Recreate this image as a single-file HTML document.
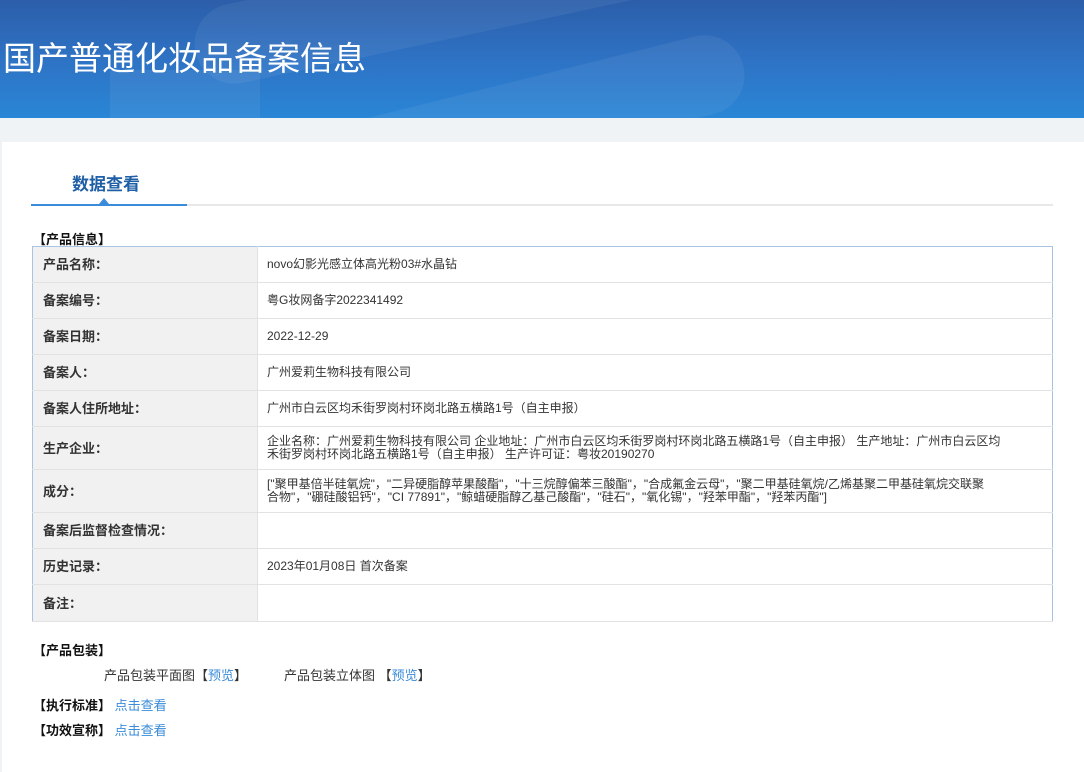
<!DOCTYPE html>
<html><head><meta charset="utf-8"><style>
*{margin:0;padding:0;box-sizing:border-box}
body{width:1084px;height:772px;overflow:hidden;background:#eff3f6;font-family:"Liberation Sans","Noto Sans CJK SC",sans-serif;color:#333;position:relative}
.hd{position:absolute;left:0;top:0;width:1084px;height:118px;background:linear-gradient(180deg,#2c5ea9 0%,#2e72c4 50%,#2a86d6 100%);overflow:hidden}
.hd h1{position:absolute;left:3px;top:32px;font-size:33px;font-weight:normal;color:#fff;letter-spacing:0}
.blob{position:absolute;border-radius:40px;background:rgba(255,255,255,.06)}
.panel{position:absolute;left:2px;top:142px;width:1082px;height:630px;background:#fff}
.tab{position:absolute;left:72px;top:170px;font-size:17px;font-weight:bold;color:#1f5fa6}
.line{position:absolute;left:31px;top:204px;width:1022px;height:2px;background:#e8e8e8}
.line b{position:absolute;left:0;top:0;width:156px;height:2px;background:#3a8bd9}
.tri{position:absolute;left:99px;top:198px;width:0;height:0;border-left:5px solid transparent;border-right:5px solid transparent;border-bottom:6px solid #3a8bd9}
.sec{position:absolute;font-size:13px;font-weight:bold;color:#111}
table{position:absolute;left:32px;top:246px;width:1021px;border-collapse:collapse;border:1px solid #a9c3e2;font-size:12px}
td{border-bottom:1px solid #e2e2e2;vertical-align:middle;line-height:13px}
td.l{width:225px;background:#f1f1f1;font-weight:bold;font-size:13px;padding-left:10px;color:#333;border-right:1px solid #e2e2e2}
td.v{padding-left:9px;color:#333}
a{color:#3a8bd9;text-decoration:none}
.t{position:absolute;font-size:13px;color:#333}
</style></head><body>
<div class="hd">
<div class="blob" style="left:190px;top:-40px;width:500px;height:80px;transform:rotate(-12deg)"></div>
<div class="blob" style="left:110px;top:70px;width:150px;height:80px;border-radius:0"></div>
<div class="blob" style="left:300px;top:80px;width:450px;height:80px;transform:rotate(-14deg)"></div>
<h1>国产普通化妆品备案信息</h1></div>
<div class="panel"></div>
<div class="tab">数据查看</div>
<div class="line"><b></b></div>
<div class="tri"></div>
<div class="sec" style="left:33px;top:229px">【产品信息】</div>
<table>
<tr style="height:36px"><td class="l">产品名称：</td><td class="v">novo幻影光感立体高光粉03#水晶钻</td></tr>
<tr style="height:36px"><td class="l">备案编号：</td><td class="v">粤G妆网备字2022341492</td></tr>
<tr style="height:36px"><td class="l">备案日期：</td><td class="v">2022-12-29</td></tr>
<tr style="height:36px"><td class="l">备案人：</td><td class="v">广州爱莉生物科技有限公司</td></tr>
<tr style="height:36px"><td class="l">备案人住所地址：</td><td class="v">广州市白云区均禾街罗岗村环岗北路五横路1号（自主申报）</td></tr>
<tr style="height:43px"><td class="l">生产企业：</td><td class="v" style="padding-right:45px">企业名称：广州爱莉生物科技有限公司 企业地址：广州市白云区均禾街罗岗村环岗北路五横路1号（自主申报） 生产地址：广州市白云区均禾街罗岗村环岗北路五横路1号（自主申报） 生产许可证：粤妆20190270</td></tr>
<tr style="height:43px"><td class="l">成分：</td><td class="v" style="padding-right:58px">["聚甲基倍半硅氧烷"，"二异硬脂醇苹果酸酯"，"十三烷醇偏苯三酸酯"，"合成氟金云母"，"聚二甲基硅氧烷/乙烯基聚二甲基硅氧烷交联聚合物"，"硼硅酸铝钙"，"CI 77891"，"鲸蜡硬脂醇乙基己酸酯"，"硅石"，"氧化锡"，"羟苯甲酯"，"羟苯丙酯"]</td></tr>
<tr style="height:36px"><td class="l">备案后监督检查情况：</td><td class="v"></td></tr>
<tr style="height:36px"><td class="l">历史记录：</td><td class="v">2023年01月08日 首次备案</td></tr>
<tr style="height:37px"><td class="l">备注：</td><td class="v"></td></tr>
</table>
<div class="sec" style="left:33px;top:640px">【产品包装】</div>
<div class="t" style="left:104px;top:665px">产品包装平面图【<a>预览</a>】</div>
<div class="t" style="left:284px;top:665px">产品包装立体图 【<a>预览</a>】</div>
<div class="sec" style="left:33px;top:695px">【执行标准】 <a style="font-weight:normal">点击查看</a></div>
<div class="sec" style="left:33px;top:720px">【功效宣称】 <a style="font-weight:normal">点击查看</a></div>
</body></html>
